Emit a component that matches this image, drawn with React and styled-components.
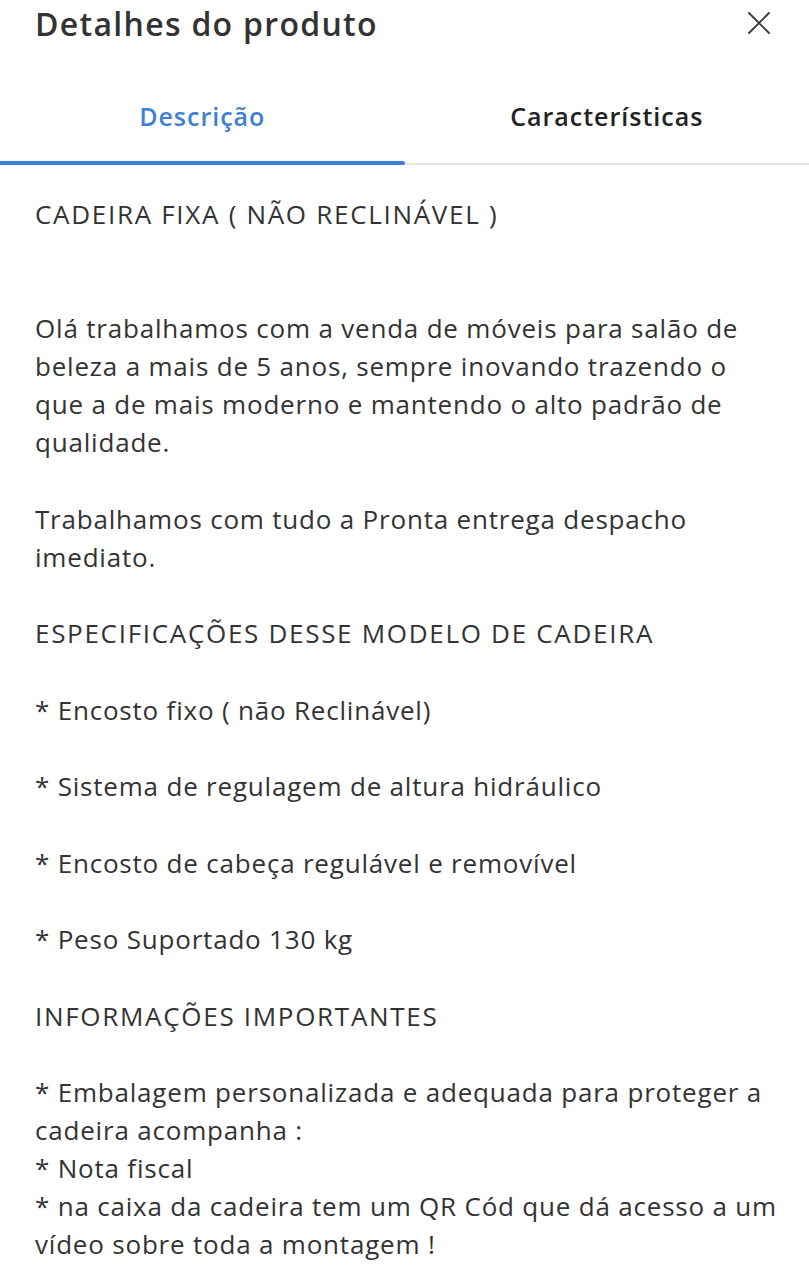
import styled, { createGlobalStyle } from "styled-components"

const GlobalStyle = createGlobalStyle`
  html, body {
    margin: 0;
    padding: 0;
    background: #fff;
  }
  body {
    font-family: "Open Sans", "Noto Sans", "Liberation Sans", sans-serif;
    color: #333;
  }
`

const blocks = [
  { heading: true, lead: true, text: "CADEIRA FIXA ( NÃO RECLINÁVEL )" },
  { text: "Olá trabalhamos com a venda de móveis para salão de beleza a mais de 5 anos, sempre inovando trazendo o que a de mais moderno e mantendo o alto padrão de qualidade." },
  { text: "Trabalhamos com tudo a Pronta entrega despacho imediato." },
  { heading: true, text: "ESPECIFICAÇÕES DESSE MODELO DE CADEIRA" },
  { text: "* Encosto fixo ( não Reclinável)" },
  { text: "* Sistema de regulagem de altura hidráulico" },
  { text: "* Encosto de cabeça regulável e removível" },
  { text: "* Peso Suportado 130 kg" },
  { heading: true, text: "INFORMAÇÕES IMPORTANTES" },
  { text: "* Embalagem personalizada e adequada para proteger a cadeira acompanha :\n* Nota fiscal\n* na caixa da cadeira tem um QR Cód que dá acesso a um vídeo sobre toda a montagem !" },
]

const App = () => {
  return (
    <>
      <GlobalStyle />
      <Sheet>
        <Header>
          <Title>Detalhes do produto</Title>
          <CloseButton aria-label="Fechar">
            <svg width="24" height="24" viewBox="0 0 24 24" fill="none" stroke="#3a3a3a" strokeWidth="1.9" strokeLinecap="round">
              <path d="M2 2 L22 22 M22 2 L2 22" />
            </svg>
          </CloseButton>
        </Header>
        <Tabs>
          <Tab active>Descrição</Tab>
          <Tab>Características</Tab>
        </Tabs>
        <Content>
          {blocks.map((b, i) =>
            b.heading ? (
              <Heading key={i} lead={b.lead}>{b.text}</Heading>
            ) : (
              <Paragraph key={i}>{b.text}</Paragraph>
            )
          )}
        </Content>
      </Sheet>
    </>
  )
}

const Sheet = styled.div`
  width: 809px;
  min-height: 1280px;
  background: #fff;
  overflow: hidden;
`

const Header = styled.div`
  height: 46px;
  display: flex;
  align-items: center;
  justify-content: space-between;
  padding: 0 38px 0 35px;
`

const Title = styled.h1`
  margin: 0;
  font-size: 32px;
  font-weight: 600;
  color: #333;
  letter-spacing: 1.3px;
`

const CloseButton = styled.button`
  border: none;
  background: none;
  padding: 0;
  display: flex;
  cursor: pointer;
`

const Tabs = styled.div`
  display: flex;
  height: 117px;
  border-bottom: 2px solid #e6e6e6;
`

const Tab = styled.div`
  flex: 1;
  display: flex;
  align-items: center;
  justify-content: center;
  padding-top: 22px;
  font-size: 25px;
  font-weight: 600;
  letter-spacing: 1px;
  color: ${p => (p.active ? "#3f80d5" : "#222")};
  position: relative;
  cursor: pointer;
  &::after {
    content: "";
    display: ${p => (p.active ? "block" : "none")};
    position: absolute;
    left: 0;
    right: 0;
    bottom: -2px;
    height: 4px;
    background: #3a80dc;
    border-radius: 0 3px 3px 0;
  }
`

const Content = styled.div`
  display: flex;
  flex-direction: column;
  gap: 38.5px;
  padding: 30px 28px 0 35px;
  font-size: 26px;
  line-height: 38px;
  color: #333;
`

const Paragraph = styled.p`
  margin: 0;
  letter-spacing: 0.8px;
  white-space: pre-line;
`

const Heading = styled.p`
  margin: 0 0 ${p => (p.lead ? "37.5px" : "0")};
  letter-spacing: 1.7px;
`

export default App
